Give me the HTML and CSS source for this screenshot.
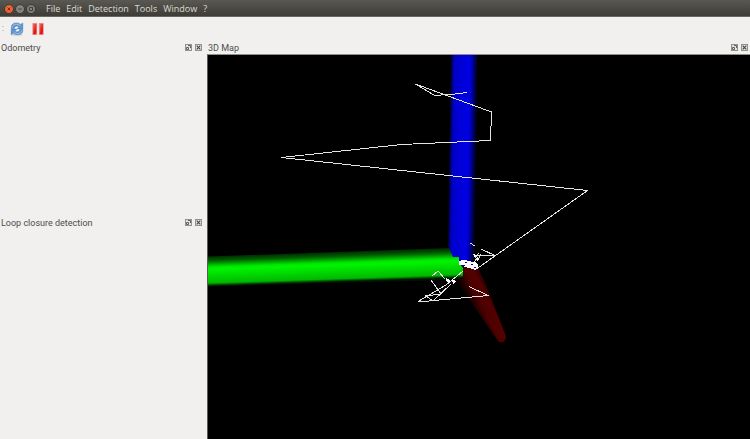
FILE: index.html
```html
<!DOCTYPE html>
<html lang="en">
<head>
<meta charset="utf-8">
<title>3D Map</title>
<link rel="stylesheet" href="styles.css">
</head>
<body>
<svg class="defs" aria-hidden="true">
  <symbol id="float" viewBox="0 0 7 7">
    <rect x=".5" y=".5" width="6" height="6" fill="#e4e3e1" stroke="#92918e"/>
    <path d="M3 1.500h2.500V4M1.500 3.500h2v2h-2z" fill="none" stroke="#62615e"/>
  </symbol>
  <symbol id="close" viewBox="0 0 7 7">
    <rect x=".5" y=".5" width="6" height="6" fill="#e4e3e1" stroke="#92918e"/>
    <path d="M1.700 1.700l3.600 3.600M5.300 1.700L1.700 5.300" stroke="#4c4b48" stroke-width="1.200"/>
  </symbol>
</svg>
<header class="menubar">
  <div class="window-buttons">
    <button class="win win-close" aria-label="Close window"><svg viewBox="0 0 10 10"><path d="M3.200 3.200l3.600 3.600M6.800 3.200L3.200 6.800"/></svg></button>
    <button class="win" aria-label="Minimize window"><svg viewBox="0 0 10 10"><path d="M3 5h4"/></svg></button>
    <button class="win" aria-label="Maximize window"><svg viewBox="0 0 10 10"><path d="M3 3h4v4H3z"/></svg></button>
  </div>
  <nav class="menus">
    <button>File</button>
    <button>Edit</button>
    <button>Detection</button>
    <button>Tools</button>
    <button>Window</button>
    <button>?</button>
  </nav>
</header>
<div class="toolbar">
  <span class="grip"></span>
  <button class="tool" aria-label="Refresh">
    <svg viewBox="0 0 14 14">
      <ellipse cx="7" cy="12.700" rx="5.500" ry="1" fill="#d2d1cf"/>
      <path d="M1.200 6.400C1 2.600 3.400.9 6.400.9c1.700 0 3 .5 4.200 1.500L12.800 1v6H6.800l1.800-1.900C7.400 4.500 5.600 4.700 5 6.400z" fill="#5f93cc" stroke="#4a7fba" stroke-width=".5"/>
      <path d="M12.900 7.600c.2 3.600-2.200 5.100-5.200 5.100-1.700 0-3-.5-4.200-1.500L1.200 12.700V7.100h6l-1.800 1.900c1.200.7 3 .3 3.600-1.400z" fill="#5f93cc" stroke="#4a7fba" stroke-width=".5"/>
      <path d="M4.400 6.600h2.600l1.700-1.500C7.400 4.300 5 4.300 4.400 6.600zM9.600 7.400H7L5.300 8.900c1.300.8 3.700.8 4.300-1.500z" fill="#eef2f7"/>
      <path d="M2.300 5.400C2.700 3 4.800 1.900 7 2.200c1.600.2 2.500.9 3.600 1.700M11.800 8.500c-.7 2.300-2.300 3.100-4.400 3.100-1.500 0-2.600-.5-3.800-1.700" fill="none" stroke="#a9c8e9" stroke-width=".9"/>
    </svg>
  </button>
  <button class="tool" aria-label="Pause">
    <svg viewBox="0 0 14 14">
      <defs><linearGradient id="pause" x2="1" y2="1"><stop offset="0" stop-color="#f47a72"/><stop offset=".5" stop-color="#e52d25"/><stop offset=".7" stop-color="#db0f0a"/><stop offset="1" stop-color="#ee453c"/></linearGradient></defs>
      <rect x="1.800" y="1.300" width="4" height="11.400" fill="url(#pause)" stroke="#ee8a84" stroke-width=".6"/>
      <rect x="8.200" y="1.300" width="4" height="11.400" fill="url(#pause)" stroke="#ee8a84" stroke-width=".6"/>
    </svg>
  </button>
</div>
<main class="workspace">
  <div class="side">
    <section class="dock">
      <div class="dock-title"><h2>Odometry</h2><button aria-label="Float Odometry"><svg><use href="#float"/></svg></button><button aria-label="Close Odometry"><svg><use href="#close"/></svg></button></div>
    </section>
    <section class="dock">
      <div class="dock-title"><h2>Loop closure detection</h2><button aria-label="Float Loop closure detection"><svg><use href="#float"/></svg></button><button aria-label="Close Loop closure detection"><svg><use href="#close"/></svg></button></div>
    </section>
  </div>
  <section class="dock">
    <div class="dock-title"><h2>3D Map</h2><button aria-label="Float 3D Map"><svg><use href="#float"/></svg></button><button aria-label="Close 3D Map"><svg><use href="#close"/></svg></button></div>
    <div class="view">
      <svg class="scene" viewBox="208 55 542 384" preserveAspectRatio="xMidYMid slice" role="img" aria-label="3D trajectory">
        <defs>
          <linearGradient id="blue" gradientUnits="userSpaceOnUse" x1="449" y1="150" x2="477" y2="150.500">
            <stop offset="0" stop-color="#000"/><stop offset=".1" stop-color="#0000a0"/><stop offset=".18" stop-color="#0000cc"/><stop offset=".68" stop-color="#0000e4"/><stop offset=".76" stop-color="#0000b4"/><stop offset="1" stop-color="#000"/>
          </linearGradient>
          <linearGradient id="green" gradientUnits="userSpaceOnUse" x1="208" y1="256" x2="209" y2="286">
            <stop offset="0" stop-color="#002800"/><stop offset=".15" stop-color="#005c00"/><stop offset=".37" stop-color="#00e800"/><stop offset=".45" stop-color="#00f400"/><stop offset=".9" stop-color="#00b800"/><stop offset="1" stop-color="#001400"/>
          </linearGradient>
          <linearGradient id="red" gradientUnits="userSpaceOnUse" x1="475" y1="312" x2="497" y2="301">
            <stop offset="0" stop-color="#100000"/><stop offset=".35" stop-color="#4c0000"/><stop offset=".7" stop-color="#540000"/><stop offset="1" stop-color="#1c0000"/>
          </linearGradient>
        </defs>
        <path d="M450 55h27l-2 198-3 12h-19l-5-16z" fill="url(#blue)"/>
        <path d="M455 279l10-13h12l7 14 22 56q0 4-3 6-3 1-5-1z" fill="url(#red)"/>
        <path d="M208 256.500L449 248l4 9h6v5l4 6v10l-15 2-240 6.500z" fill="url(#green)"/>
        <g class="trace">
          <path d="M467.500 92.500l-12 1.500-21 1.500-19-11.500 76 28-1 28.500-89 4-120 13 306 33-111 78.500"/>
          <path d="M470 243l5 3M481 249l15 7-20-1M473 254l4 3M479 253l-4 5M474 262l4-5M478 260l3-6"/>
          <path d="M463 271l-17 14-28 16.500M451 284l-18 17-8-6M431 280l10 14-16 2M432 276l6-5 7 8M418 302l70-6.500-19-9"/>
        </g>
        <path class="cluster" d="M459 261l2 0 0-1 6 0 0 1 4 0 0 1 4 0 3 3 0 3-3 2-3-1-3-1-4-1-3-1-3-1zM474 254l2 2-2 1zM477 257l3 2-3 2zM446 278l4 2-1 4-3-3zM452 279l4 2-3 3z"/>
        <path class="speckle" d="M461 265.500h4M471 264.500h2M465 262.500h2M474 267.500h2"/>
      </svg>
    </div>
  </section>
</main>
</body>
</html>
```
FILE: styles.css
```css
* { box-sizing: border-box; }
body {
  margin: 0;
  min-height: 100vh;
  display: flex;
  flex-direction: column;
  background: #f1f0ee;
  color: #4c4c4c;
  font: 9px/12px Roboto, "Open Sans", sans-serif;
}
button {
  margin: 0;
  padding: 0;
  border: 0;
  background: none;
  color: inherit;
  font: inherit;
}
svg { display: block; }
.defs { position: absolute; width: 0; height: 0; }
.menubar {
  display: flex;
  align-items: center;
  height: 17px;
  padding: 1px 4px 0;
  gap: 10px;
  border-bottom: 1px solid #69675f;
  background: linear-gradient(#5a5852, #3d3c37);
  color: #dfdbd2;
  font-family: "Open Sans", "Noto Sans", sans-serif;
}
.window-buttons { display: flex; gap: 1px; }
.win {
  width: 10px;
  height: 10px;
  border: 1px solid #3a3935;
  border-radius: 50%;
  background: #85837b;
}
.win svg { width: 8px; height: 8px; fill: none; stroke: #3c3b37; stroke-width: 1.2; }
.win-close { background: #f06236; }
.win-close svg { stroke: #732c16; }
.menus { display: flex; gap: 6px; }
.toolbar {
  display: flex;
  align-items: center;
  height: 23px;
  padding: 0 2px;
  gap: 7px;
}
.grip { width: 2px; height: 5px; margin-right: -1px; border: solid #cfcecb; border-width: 1px 0; }
.tool svg { width: 14px; height: 14px; }
.workspace { flex: 1; display: grid; grid-template-columns: 207px 1fr; }
.side { display: grid; grid-template-rows: 175px 1fr; }
.dock { display: flex; flex-direction: column; }
.dock-title {
  display: flex;
  align-items: center;
  height: 14px;
  padding: 1px 2px 0 1px;
  gap: 3px;
}
.side .dock-title { padding-right: 5px; }
.dock-title h2 { flex: 1; margin: 0; font: inherit; }
.dock-title svg { width: 7px; height: 7px; }
.view {
  flex: 1;
  display: grid;
  border-top: 1px solid #8f8e8b;
  border-left: 1px solid #5c5b58;
  background: #000;
}
.scene { width: 100%; height: 100%; }
.trace { fill: none; stroke: #e4e4e4; stroke-width: 1; shape-rendering: crispEdges; }
.cluster { fill: #fff; shape-rendering: crispEdges; }
.speckle { stroke: #0000c8; shape-rendering: crispEdges; }
```
